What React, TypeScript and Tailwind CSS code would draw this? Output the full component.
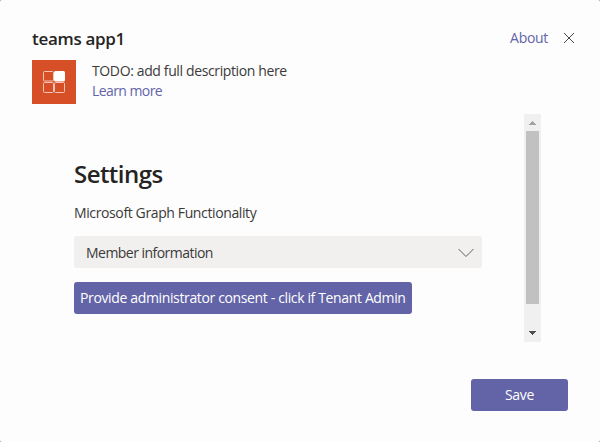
import React from "react";

function AppIcon() {
  return (
    <svg width="44" height="44" viewBox="0 0 44 44" className="shrink-0">
      <rect width="44" height="44" fill="#d74f27" />
      <g fill="none" stroke="#f3c5b6" strokeWidth="1">
        <rect x="11.5" y="11.5" width="10" height="9.5" rx="1" />
        <rect x="11.5" y="22.5" width="10" height="10" rx="1" />
        <rect x="22.5" y="22.5" width="10" height="10" rx="1" />
      </g>
      <rect x="22" y="11" width="11" height="10.5" rx="1.5" fill="#ffffff" />
    </svg>
  );
}

function Header() {
  return (
    <header className="flex h-5 items-center">
      <h1 className="pt-px text-[17px] leading-5 font-semibold tracking-[-0.3px] text-[#252423]">teams app1</h1>
      <a className="ml-auto leading-5 tracking-[-0.3px] text-[#6264a7]">About</a>
      <svg width="12" height="12" viewBox="0 0 12 12" className="mr-[-7px] ml-[15px]" stroke="#484644" strokeWidth="1">
        <path d="M1 1l10 10M11 1L1 11" />
      </svg>
    </header>
  );
}

function ScrollBar() {
  return (
    <div className="flex h-[228px] w-[17px] flex-col items-center bg-[#f0f0f0]">
      <svg width="17" height="17" shapeRendering="crispEdges">
        <path d="M8 7h1v1h1v1h1v1h1v1H5v-1h1V9h1V8h1z" fill="#a3a3a3" />
      </svg>
      <div className="h-[173px] w-[13px] bg-[#c1c1c1]" />
      <svg width="17" height="17" className="mt-auto" shapeRendering="crispEdges">
        <path d="M5 6h7v1h-1v1h-1v1H9v1H8V9H7V8H6V7H5z" fill="#505050" />
      </svg>
    </div>
  );
}

export default function App() {
  return (
    <div className="bg-[#a0a0a0]">
      <div className="flex h-[442px] w-[600px] flex-col rounded-[2px] bg-[#fdfdfd] px-8 pt-7 font-['Open_Sans','Noto_Sans',sans-serif] text-[14px] leading-5 text-[#3b3a39]">
        <Header />
        <div className="mt-3 flex gap-4">
          <AppIcon />
          <div className="flex flex-col pt-px">
            <p className="tracking-[-0.37px]">TODO: add full description here</p>
            <a className="tracking-[-0.58px] text-[#6264a7]">Learn more</a>
          </div>
        </div>
        <div className="mt-[10px] flex h-[228px]">
          <main className="flex w-[450px] flex-col pt-11 pl-[42px]">
            <h2 className="text-[24px] leading-8 font-semibold tracking-[-0.55px] text-[#252423]">Settings</h2>
            <p className="mt-[13px] tracking-[-0.38px]">Microsoft Graph Functionality</p>
            <div className="mt-[13px] flex h-8 shrink-0 items-center justify-between rounded-[3px] bg-[#f1f0ef] pr-2 pl-3">
              <span className="pt-[2px] tracking-[-0.53px]">Member information</span>
              <svg width="16" height="10" viewBox="0 0 16 10" fill="none" stroke="#605e5c" className="mt-px">
                <path d="M.5 1L8 8.5 15.5 1" />
              </svg>
            </div>
            <button className="mt-[14px] flex h-8 w-[338px] shrink-0 items-center rounded-[3px] bg-[#6264a7] pl-[6px] whitespace-nowrap text-white">
              <span className="font-medium tracking-[-0.36px]">Provide administrator consent - click if Tenant Admin</span>
            </button>
          </main>
          <div className="ml-[42px]">
            <ScrollBar />
          </div>
        </div>
        <footer className="mt-[37px] flex justify-end">
          <button className="h-8 w-[97px] rounded-[3px] bg-[#6264a7] font-medium tracking-[-0.35px] text-white">Save</button>
        </footer>
      </div>
    </div>
  );
}
